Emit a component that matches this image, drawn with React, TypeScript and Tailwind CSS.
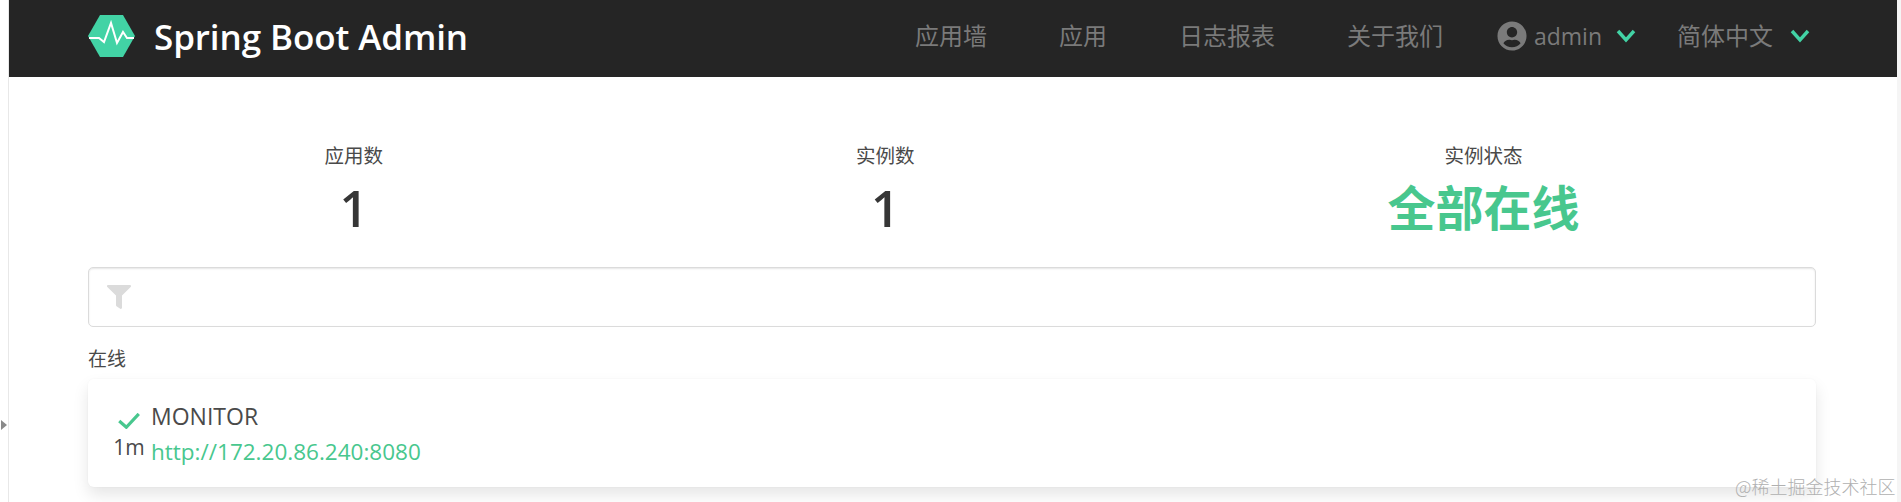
import React from "react";
import { FaFilter, FaUserCircle } from "react-icons/fa";

const Chevron = () => (
  <svg viewBox="0 0 20 16" className="w-5 h-4 text-[#42d3a5]" fill="none" stroke="currentColor" strokeWidth="3.4">
    <polyline points="2,3 10,12 18,3" />
  </svg>
);

const Logo = () => (
  <svg viewBox="0 0 47 42" className="w-[47px] h-[42px]">
    <polygon points="0,21 12,0 35,0 47,21 35,42 12,42" fill="#42d3a5" />
    <polyline
      points="1,23 11,23 16,27 23,8 29,28 35,17 39,23 46,23"
      fill="none"
      stroke="#fff"
      strokeWidth="2"
    />
  </svg>
);

const Stat = ({ label, children }: { label: string; children: React.ReactNode }) => (
  <div className="flex flex-col items-center">
    <p className="text-[19.5px] leading-[22px] text-[#4a4a4a]">{label}</p>
    {children}
  </div>
);

const navItems = ["应用墙", "应用", "日志报表", "关于我们"];

const App = () => {
  return (
    <div className="h-[502px] w-[1901px] flex overflow-hidden bg-white relative font-['Open_Sans','Noto_Sans_CJK_SC',sans-serif]">
      <div className="w-[9px] shrink-0 bg-white border-r border-[#e8e8e8]" />
      <div className="absolute left-[1px] top-[420px] w-0 h-0 border-y-[5px] border-y-transparent border-l-[6px] border-l-[#8a8a8a]" />

      <div className="flex-1 flex flex-col min-w-0">
        <nav className="h-[77px] shrink-0 bg-[#252525] flex items-center pl-[79px] pr-[87px] pb-[5px]">
          <Logo />
          <span className="ml-[19px] text-[35px] font-semibold text-white leading-none tracking-[-0.1px]">
            Spring Boot Admin
          </span>
          <div className="ml-auto flex items-center text-[24px] text-[#7a7a7a]">
            <div className="flex gap-[72px] mr-[54px]">
              {navItems.map((item) => (
                <span key={item}>{item}</span>
              ))}
            </div>
            <FaUserCircle className="w-[30px] h-[30px] mr-[7px]" />
            <span className="text-[23px] mr-[14px]">admin</span>
            <Chevron />
            <span className="ml-[41px] mr-[17px]">简体中文</span>
            <Chevron />
          </div>
        </nav>

        <main className="flex-1 px-[79px] pt-[68px] pr-[81px]">
          <div className="flex justify-around">
            <Stat label="应用数">
              <p className="mt-[11px] text-[50px] leading-[60px] font-semibold text-[#363636]">1</p>
            </Stat>
            <Stat label="实例数">
              <p className="mt-[11px] text-[50px] leading-[60px] font-semibold text-[#363636]">1</p>
            </Stat>
            <Stat label="实例状态">
              <p className="mt-[11px] text-[48px] leading-[60px] font-bold text-[#48c78e]">全部在线</p>
            </Stat>
          </div>

          <div className="mt-[29px] h-[60px] rounded-[5px] border border-[#dbdbdb] shadow-[inset_0_1px_2px_rgba(10,10,10,0.1)] flex items-center pl-[18px]">
            <FaFilter className="w-[24px] h-[24px] text-[#dbdbdb]" />
          </div>

          <p className="mt-[20px] text-[19px] leading-[24px] text-[#4a4a4a]">在线</p>

          <div className="mt-[8px] h-[108px] rounded-[6px] bg-white shadow-[0_8px_16px_rgba(10,10,10,0.1),0_0_0_1px_rgba(10,10,10,0.01)] flex pl-[19px] pt-[21px]">
            <div className="w-[44px] flex flex-col items-center">
              <svg viewBox="0 0 24 18" className="w-[22px] h-[16px] mt-[13px]" fill="none" stroke="#48c78e" strokeWidth="3.6">
                <polyline points="1,9 9,16 23,1" />
              </svg>
              <span className="mt-[6px] text-[21px] leading-[24px] text-[#4a4a4a]">1m</span>
            </div>
            <div className="flex flex-col">
              <span className="text-[23px] leading-[32px] text-[#4a4a4a]">MONITOR</span>
              <span className="mt-[4px] text-[22.5px] leading-[32px] text-[#48c78e]">http://172.20.86.240:8080</span>
            </div>
          </div>
        </main>
      </div>

      <div className="w-[4px] shrink-0 bg-[#f5f5f5]" />
      <span className="absolute left-[1735px] top-[474px] text-[18px] leading-[24px] text-[#b0b0b0] font-['Noto_Sans_CJK_SC',sans-serif] font-light">
        @稀土掘金技术社区
      </span>
    </div>
  );
};

export default App;
